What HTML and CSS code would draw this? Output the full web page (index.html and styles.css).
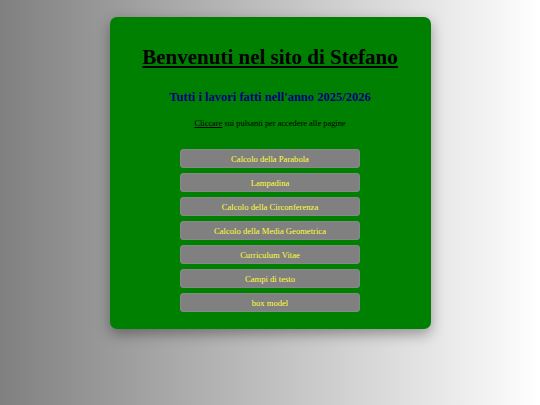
FILE: index.html
```html
<!DOCTYPE html>
<html lang="it">
<head>
<meta charset="utf-8">
<title>Benvenuti nel sito di Stefano</title>
<link rel="stylesheet" href="styles.css">
</head>
<body>
<main class="card">
  <h1 class="title">Benvenuti nel sito di Stefano</h1>
  <h2 class="subtitle">Tutti i lavori fatti nell'anno 2025/2026</h2>
  <p class="hint"><a class="hint-link" href="#">Cliccare</a> sui pulsanti per accedere alle pagine</p>
  <nav class="buttons">
    <a class="btn" href="#">Calcolo della Parabola</a>
    <a class="btn" href="#">Lampadina</a>
    <a class="btn" href="#">Calcolo della Circonferenza</a>
    <a class="btn" href="#">Calcolo della Media Geometrica</a>
    <a class="btn" href="#">Curriculum Vitae</a>
    <a class="btn" href="#">Campi di testo</a>
    <a class="btn" href="#">box model</a>
  </nav>
</main>
</body>
</html>
```

FILE: styles.css
```css
html, body {
  margin: 0;
  padding: 0;
}
body {
  min-height: 405px;
  background: linear-gradient(to right, #808080, #ffffff);
  font-family: "Liberation Serif", "Times New Roman", serif;
  padding-top: 17px;
  box-sizing: border-box;
}
.card {
  width: 321px;
  margin: 0 auto;
  background: #008000;
  border-radius: 7px;
  box-shadow: 0 5px 14px rgba(0, 0, 0, 0.35);
  padding: 28px 0 17px;
  box-sizing: border-box;
  display: flex;
  flex-direction: column;
  align-items: center;
  text-align: center;
}
.title {
  margin: 0;
  font-size: 21px;
  line-height: 24px;
  font-weight: bold;
  color: #000;
  text-decoration: underline;
}
.subtitle {
  margin: 21px 0 0;
  font-size: 12.5px;
  line-height: 14px;
  font-weight: bold;
  color: #000080;
}
.hint {
  margin: 15px 0 0;
  font-size: 8.4px;
  line-height: 10px;
  color: #000;
}
.hint-link {
  color: #000;
  text-decoration: underline;
}
.buttons {
  margin-top: 20px;
  display: flex;
  flex-direction: column;
  gap: 5px;
}
.btn {
  display: flex;
  align-items: center;
  justify-content: center;
  width: 180px;
  height: 19px;
  box-sizing: border-box;
  background: #808080;
  border: 1px solid #868a86;
  border-radius: 3px;
  color: #ffff33;
  font-size: 8.6px;
  text-decoration: none;
}
```
